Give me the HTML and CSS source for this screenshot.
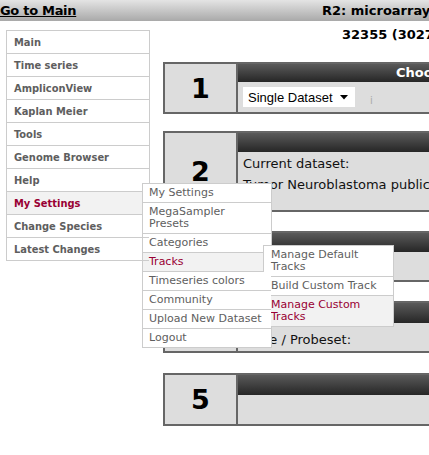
FILE: index.html
```html
<!DOCTYPE html>
<html>
<head>
<meta charset="utf-8">
<link rel="stylesheet" href="styles.css">
</head>
<body>
<div class="topbar">
  <div class="topleft"><a class="home" href="#">Go to Main</a></div>
  <div class="apptitle">R2: microarray analysis and visualization platform</div>
</div>
<div class="layout">
  <nav class="sidenav">
    <ul class="navlist">
      <li class="navitem">Main</li>
      <li class="navitem">Time series</li>
      <li class="navitem">AmpliconView</li>
      <li class="navitem">Kaplan Meier</li>
      <li class="navitem">Tools</li>
      <li class="navitem">Genome Browser</li>
      <li class="navitem">Help</li>
      <li class="navitem active">My Settings
        <ul class="menu">
          <li class="mitem">My Settings</li>
          <li class="mitem">MegaSampler Presets</li>
          <li class="mitem">Categories</li>
          <li class="mitem hl">Tracks
            <ul class="menu submenu">
              <li class="mitem">Manage Default Tracks</li>
              <li class="mitem">Build Custom Track</li>
              <li class="mitem hl">Manage Custom Tracks</li>
            </ul>
          </li>
          <li class="mitem">Timeseries colors</li>
          <li class="mitem">Community</li>
          <li class="mitem">Upload New Dataset</li>
          <li class="mitem">Logout</li>
        </ul>
      </li>
      <li class="navitem">Change Species</li>
      <li class="navitem">Latest Changes</li>
    </ul>
  </nav>
  <main class="content">
    <div class="stats">32355 (30270 samples in 1455 datasets)</div>

    <section class="panel p1">
      <div class="num">1</div>
      <div class="pbody">
        <div class="phead">Choose a dataset type</div>
        <div class="pcontent c1">
          <div class="selectbox"><span class="seltext">Single Dataset</span>
            <svg class="selarrow" width="8" height="5" viewBox="0 0 8 5"><path d="M0 0H8L4 4.5Z" fill="#000"/></svg>
          </div>
          <span class="info">i</span>
        </div>
      </div>
    </section>

    <section class="panel p2">
      <div class="num">2</div>
      <div class="pbody">
        <div class="phead"></div>
        <div class="pcontent c2">
          <div class="line">Current dataset:</div>
          <div class="line">Tumor Neuroblastoma public - Versteeg - 88 - MAS5.0 - u133p2</div>
        </div>
      </div>
    </section>

    <section class="panel p3">
      <div class="num">3</div>
      <div class="pbody">
        <div class="phead"></div>
        <div class="pcontent c3"></div>
      </div>
    </section>

    <section class="panel p4">
      <div class="num">4</div>
      <div class="pbody">
        <div class="phead"></div>
        <div class="pcontent c4"><div class="line">Gene / Probeset:</div></div>
      </div>
    </section>

    <section class="panel p5">
      <div class="num">5</div>
      <div class="pbody">
        <div class="phead"></div>
        <div class="pcontent c5"></div>
      </div>
    </section>
  </main>
</div>
</body>
</html>
```
FILE: styles.css
```css
html, body {
  margin: 0;
  padding: 0;
  overflow: hidden;
  background: #fff;
}
body {
  font-family: "DejaVu Sans", Verdana, sans-serif;
  color: #000;
}
ul { list-style: none; margin: 0; padding: 0; }

.topbar {
  display: flex;
  height: 21px;
  box-sizing: border-box;
  padding-top: 2px;
  background: linear-gradient(to bottom, #e4e4e4, #a9a9a9);
  font-size: 13px;
  font-weight: bold;
  line-height: 18px;
  white-space: nowrap;
}
.topleft { flex: 0 0 322px; }
.home { color: #000; text-decoration: underline; letter-spacing: -0.3px; }
.apptitle { color: #000; }

.layout {
  display: flex;
  align-items: flex-start;
}

.sidenav {
  flex: 0 0 144px;
  margin: 9px 0 0 6px;
  position: relative;
  z-index: 5;
}
.navlist {
  border: 1px solid #ccc;
  border-bottom: none;
  background: #fff;
}
.navitem {
  position: relative;
  height: 22px;
  line-height: 23px;
  border-bottom: 1px solid #ccc;
  padding-left: 7px;
  font-family: "DejaVu Sans Condensed", "DejaVu Sans", sans-serif;
  font-size: 11px;
  font-weight: bold;
  color: #5e5e5e;
  white-space: nowrap;
}
.navitem.active {
  background: #f2f2f2;
  color: #990033;
}

.menu {
  position: absolute;
  top: -9px;
  left: 135px;
  width: 130px;
  box-sizing: border-box;
  background: #fff;
  border: 1px solid #ccc;
  border-bottom: none;
  font-weight: normal;
  white-space: normal;
  line-height: 12px;
}
.mitem {
  position: relative;
  padding: 3px 6px 3px 6px;
  line-height: 12px;
  border-bottom: 1px solid #ccc;
  font-family: "DejaVu Sans", Verdana, sans-serif;
  font-size: 11px;
  font-weight: normal;
  color: #5e5e5e;
  background: #fff;
}
.mitem.hl {
  background: #f2f2f2;
  color: #990033;
}
.submenu {
  top: -8px;
  left: 120px;
  width: 131px;
}
.submenu .mitem { padding-left: 7px; }

.content {
  flex: 0 0 700px;
  margin-left: 13px;
  padding-top: 6px;
}
.stats {
  font-size: 13px;
  font-weight: bold;
  line-height: 16px;
  padding-left: 179px;
  white-space: nowrap;
  margin-bottom: 19px;
}

.panel {
  display: grid;
  grid-template-columns: 73px 1fr;
  border: 2px solid #666;
  background: #ddd;
  margin-bottom: 17px;
}
.p2 { margin-bottom: 19px; }
.p3 { margin-bottom: 19px; }
.p4 { margin-bottom: 20px; }
.num {
  display: flex;
  align-items: center;
  justify-content: center;
  border-right: 2px solid #666;
  font-size: 27px;
  font-weight: bold;
  color: #000;
  background: #ddd;
}
.pbody { display: flex; flex-direction: column; }
.phead {
  height: 19px;
  line-height: 19px;
  background: linear-gradient(to bottom, #5a5a5a, #262626);
  color: #fff;
  font-size: 13px;
  font-weight: bold;
  padding-left: 158px;
  white-space: nowrap;
}
.p1 .phead { height: 18px; line-height: 18px; }
.p4 .phead, .p5 .phead { height: 20px; }
.pcontent {
  padding: 0 5px;
  background: #ddd;
  font-size: 13px;
  color: #111;
}
.line { line-height: 21px; white-space: nowrap; }
.c1 {
  height: 30px;
  box-sizing: border-box;
  padding-top: 5px;
  display: flex;
  align-items: flex-end;
  padding-bottom: 5px;
}
.selectbox {
  width: 112px;
  height: 20px;
  box-sizing: border-box;
  background: #fff;
  display: flex;
  align-items: center;
  padding-left: 5px;
  font-family: "Liberation Sans", Arial, sans-serif;
  font-size: 13px;
  color: #000;
}
.seltext { flex: 1; }
.selarrow { margin-right: 7px; }
.info {
  margin-left: 15px;
  font-size: 10px;
  color: #aaa;
  line-height: 12px;
}
.c2 { height: 58px; box-sizing: border-box; padding-top: 1px; }
.c3 { height: 28px; }
.c4 { height: 28px; box-sizing: border-box; padding-top: 6px; }
.c5 { height: 29px; }
```
